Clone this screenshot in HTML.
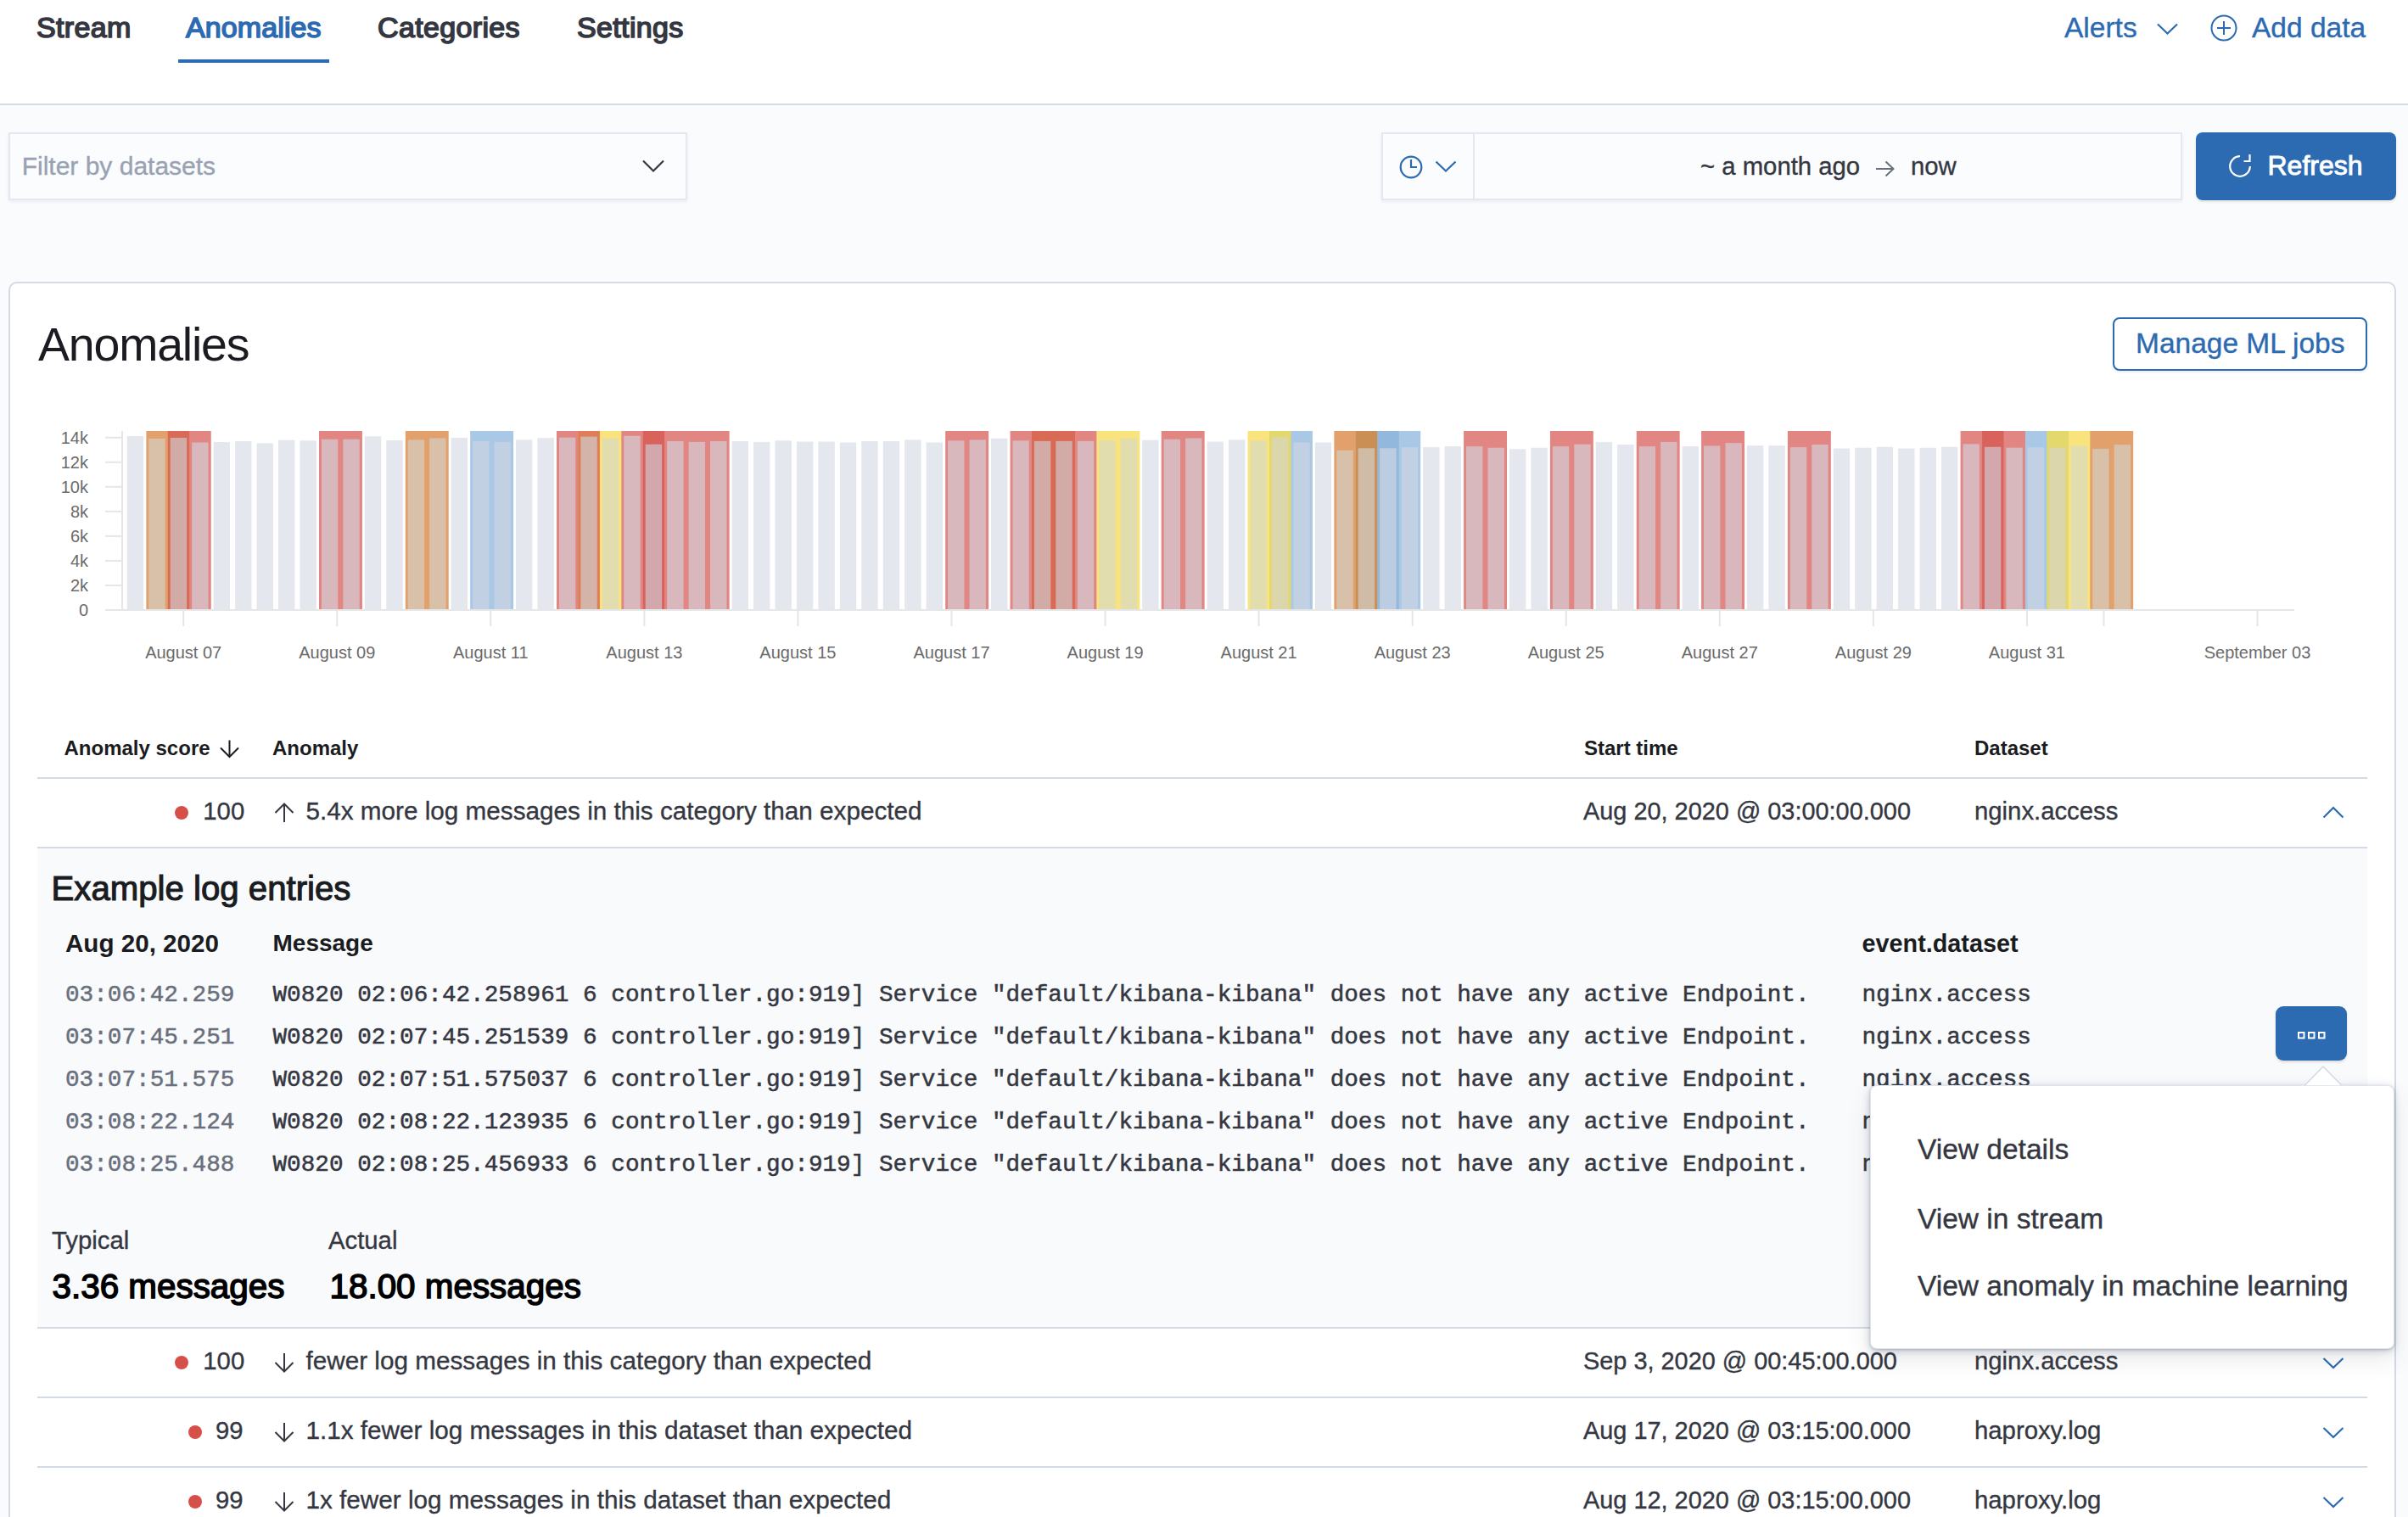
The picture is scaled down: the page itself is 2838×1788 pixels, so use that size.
<!DOCTYPE html>
<html><head><meta charset="utf-8">
<style>
html,body{margin:0;padding:0;}
body{width:2838px;height:1788px;overflow:hidden;position:relative;background:#fafbfd;font-family:'Liberation Sans', sans-serif;}
.t{position:absolute;white-space:nowrap;line-height:1;}
.r{position:absolute;}
svg{position:absolute;overflow:visible;}
</style></head><body>

<div class="r" style="left:0.0px;top:0.0px;width:2838.0px;height:122.0px;background:#ffffff;"></div>
<div class="r" style="left:0.0px;top:122.0px;width:2838.0px;height:2.0px;background:#d3dae6;"></div>
<div class="t" style="left:43.0px;top:15.4px;font-size:34px;color:#343741;font-weight:400;font-family:'Liberation Sans', sans-serif;letter-spacing:0.35px;-webkit-text-stroke:1.6px #343741;">Stream</div>
<div class="t" style="left:219.0px;top:15.4px;font-size:34px;color:#2c6ab1;font-weight:400;font-family:'Liberation Sans', sans-serif;letter-spacing:0.1px;-webkit-text-stroke:1.6px #2c6ab1;">Anomalies</div>
<div class="r" style="left:210.0px;top:70.0px;width:178.0px;height:4.0px;background:#2c6ab1;"></div>
<div class="t" style="left:445.0px;top:15.4px;font-size:34px;color:#343741;font-weight:400;font-family:'Liberation Sans', sans-serif;letter-spacing:0.35px;-webkit-text-stroke:1.6px #343741;">Categories</div>
<div class="t" style="left:680.0px;top:15.4px;font-size:34px;color:#343741;font-weight:400;font-family:'Liberation Sans', sans-serif;letter-spacing:0.35px;-webkit-text-stroke:1.6px #343741;">Settings</div>
<div class="t" style="left:2433.0px;top:15.6px;font-size:33.5px;color:#2c6ab1;font-weight:400;font-family:'Liberation Sans', sans-serif;-webkit-text-stroke:0.35px #2c6ab1;">Alerts</div>
<svg style="left:0;top:0" width="2838" height="120"><polyline points="2543,28.5 2554.5,39.5 2566,28.5" fill="none" stroke="#2c6ab1" stroke-width="2.2"/><circle cx="2621" cy="33" r="14.5" fill="none" stroke="#2c6ab1" stroke-width="2"/><line x1="2621" y1="25" x2="2621" y2="41" stroke="#2c6ab1" stroke-width="2"/><line x1="2613" y1="33" x2="2629" y2="33" stroke="#2c6ab1" stroke-width="2"/></svg>
<div class="t" style="left:2654.0px;top:15.6px;font-size:33.5px;color:#2c6ab1;font-weight:400;font-family:'Liberation Sans', sans-serif;-webkit-text-stroke:0.35px #2c6ab1;">Add data</div>
<div class="r" style="left:10px;top:156px;width:800px;height:80px;box-sizing:border-box;background:#fbfcfd;border:2px solid #e3e8f0;box-shadow:0 2px 4px rgba(152,162,179,0.15);"></div>
<div class="t" style="left:25.7px;top:180.6px;font-size:30px;color:#98a2b3;font-weight:400;font-family:'Liberation Sans', sans-serif;-webkit-text-stroke:0.35px #98a2b3;">Filter by datasets</div>
<svg style="left:0;top:0" width="900" height="260"><polyline points="758,189.5 770,201.5 782,189.5" fill="none" stroke="#343741" stroke-width="2.2"/></svg>
<div class="r" style="left:1628px;top:156px;width:944px;height:80px;box-sizing:border-box;background:#fbfcfd;border:2px solid #e3e8f0;box-shadow:0 2px 4px rgba(152,162,179,0.15);"></div>
<div class="r" style="left:1736.0px;top:158.0px;width:2.0px;height:76.0px;background:#e3e8f0;"></div>
<svg style="left:0;top:0" width="2838" height="260"><circle cx="1663" cy="197" r="12.3" fill="none" stroke="#2c6ab1" stroke-width="2.2"/><polyline points="1663,188 1663,197 1670,197" fill="none" stroke="#2c6ab1" stroke-width="2.2"/><polyline points="1692.5,190.5 1704,201.5 1715.5,190.5" fill="none" stroke="#2c6ab1" stroke-width="2.2"/><line x1="2211" y1="199" x2="2232" y2="199" stroke="#69707d" stroke-width="2"/><polyline points="2222.5,190.5 2231.5,199 2222.5,207.5" fill="none" stroke="#69707d" stroke-width="2"/></svg>
<div class="t" style="left:2004.0px;top:181.2px;font-size:29.3px;color:#343741;font-weight:400;font-family:'Liberation Sans', sans-serif;-webkit-text-stroke:0.35px #343741;">~ a month ago</div>
<div class="t" style="left:2252.0px;top:181.2px;font-size:29.3px;color:#343741;font-weight:400;font-family:'Liberation Sans', sans-serif;-webkit-text-stroke:0.35px #343741;">now</div>
<div class="r" style="left:2588px;top:156px;width:236px;height:80px;border-radius:8px;background:#2c6ab1;box-shadow:0 2px 3px rgba(0,0,0,0.1);"></div>
<svg style="left:0;top:0" width="2838" height="260"><path d="M2651.8,196 A11.8,11.8 0 1 1 2640,184.2" fill="none" stroke="#fff" stroke-width="2.2"/><polyline points="2644.5,190 2651.5,190 2651.5,182" fill="none" stroke="#fff" stroke-width="2.2"/></svg>
<div class="t" style="left:2672.5px;top:178.9px;font-size:32px;color:#ffffff;font-weight:400;font-family:'Liberation Sans', sans-serif;-webkit-text-stroke:0.9px #ffffff;">Refresh</div>
<div class="r" style="left:10px;top:332px;width:2814px;height:1600px;box-sizing:border-box;background:#fff;border:2px solid #d3dae6;border-radius:10px;"></div>
<div class="t" style="left:45.0px;top:378.9px;font-size:55.5px;color:#1a1c21;font-weight:400;font-family:'Liberation Sans', sans-serif;letter-spacing:-1.2px;">Anomalies</div>
<div class="r" style="left:2490px;top:374px;width:300px;height:63px;box-sizing:border-box;border:2px solid #2c6ab1;border-radius:8px;background:#fff;box-shadow:0 2px 3px rgba(0,0,0,0.08);"></div>
<div class="t" style="left:2517.0px;top:387.6px;font-size:33.5px;color:#2c6ab1;font-weight:400;font-family:'Liberation Sans', sans-serif;-webkit-text-stroke:0.35px #2c6ab1;">Manage ML jobs</div>
<svg style="left:0;top:0" width="2838" height="800"><line x1="124" y1="719.0" x2="143" y2="719.0" stroke="#e6e6e6" stroke-width="2"/><text x="104" y="726.0" text-anchor="end" font-family="Liberation Sans" font-size="20" fill="#6b6b6b">0</text><line x1="124" y1="690.0" x2="143" y2="690.0" stroke="#e6e6e6" stroke-width="2"/><text x="104" y="697.0" text-anchor="end" font-family="Liberation Sans" font-size="20" fill="#6b6b6b">2k</text><line x1="124" y1="660.9" x2="143" y2="660.9" stroke="#e6e6e6" stroke-width="2"/><text x="104" y="667.9" text-anchor="end" font-family="Liberation Sans" font-size="20" fill="#6b6b6b">4k</text><line x1="124" y1="631.9" x2="143" y2="631.9" stroke="#e6e6e6" stroke-width="2"/><text x="104" y="638.9" text-anchor="end" font-family="Liberation Sans" font-size="20" fill="#6b6b6b">6k</text><line x1="124" y1="602.8" x2="143" y2="602.8" stroke="#e6e6e6" stroke-width="2"/><text x="104" y="609.8" text-anchor="end" font-family="Liberation Sans" font-size="20" fill="#6b6b6b">8k</text><line x1="124" y1="573.8" x2="143" y2="573.8" stroke="#e6e6e6" stroke-width="2"/><text x="104" y="580.8" text-anchor="end" font-family="Liberation Sans" font-size="20" fill="#6b6b6b">10k</text><line x1="124" y1="544.8" x2="143" y2="544.8" stroke="#e6e6e6" stroke-width="2"/><text x="104" y="551.8" text-anchor="end" font-family="Liberation Sans" font-size="20" fill="#6b6b6b">12k</text><line x1="124" y1="515.7" x2="143" y2="515.7" stroke="#e6e6e6" stroke-width="2"/><text x="104" y="522.7" text-anchor="end" font-family="Liberation Sans" font-size="20" fill="#6b6b6b">14k</text><line x1="144" y1="508.0" x2="144" y2="719.0" stroke="#e6e6e6" stroke-width="2"/><rect x="172.36" y="508.0" width="26.05" height="211.0" fill="#e2a06c"/><rect x="197.81" y="508.0" width="26.05" height="211.0" fill="#d96a55"/><rect x="223.26" y="508.0" width="25.46" height="211.0" fill="#e18682"/><rect x="376.00" y="508.0" width="50.91" height="211.0" fill="#e18682"/><rect x="477.81" y="508.0" width="50.91" height="211.0" fill="#e2a06c"/><rect x="554.18" y="508.0" width="50.91" height="211.0" fill="#a9c8e6"/><rect x="656.00" y="508.0" width="26.05" height="211.0" fill="#e18682"/><rect x="681.45" y="508.0" width="26.06" height="211.0" fill="#df7e56"/><rect x="706.91" y="508.0" width="26.05" height="211.0" fill="#f9e37c"/><rect x="732.36" y="508.0" width="26.06" height="211.0" fill="#e18682"/><rect x="757.82" y="508.0" width="26.06" height="211.0" fill="#d9625c"/><rect x="783.27" y="508.0" width="76.37" height="211.0" fill="#e18682"/><rect x="1114.19" y="508.0" width="50.91" height="211.0" fill="#e18682"/><rect x="1190.56" y="508.0" width="26.05" height="211.0" fill="#e18682"/><rect x="1216.01" y="508.0" width="51.51" height="211.0" fill="#d96a55"/><rect x="1266.92" y="508.0" width="26.05" height="211.0" fill="#e18682"/><rect x="1292.38" y="508.0" width="50.91" height="211.0" fill="#f9e37c"/><rect x="1368.74" y="508.0" width="50.91" height="211.0" fill="#e18682"/><rect x="1470.56" y="508.0" width="26.06" height="211.0" fill="#f9e37c"/><rect x="1496.02" y="508.0" width="26.05" height="211.0" fill="#e2d86c"/><rect x="1521.47" y="508.0" width="25.45" height="211.0" fill="#a9c8e6"/><rect x="1572.38" y="508.0" width="26.05" height="211.0" fill="#e2a06c"/><rect x="1597.84" y="508.0" width="26.05" height="211.0" fill="#c98f55"/><rect x="1623.29" y="508.0" width="26.05" height="211.0" fill="#93b8de"/><rect x="1648.74" y="508.0" width="25.46" height="211.0" fill="#a9c8e6"/><rect x="1725.11" y="508.0" width="50.91" height="211.0" fill="#e18682"/><rect x="1826.93" y="508.0" width="50.91" height="211.0" fill="#e18682"/><rect x="1928.75" y="508.0" width="50.91" height="211.0" fill="#e18682"/><rect x="2005.12" y="508.0" width="50.91" height="211.0" fill="#e18682"/><rect x="2106.93" y="508.0" width="50.91" height="211.0" fill="#e18682"/><rect x="2310.57" y="508.0" width="26.05" height="211.0" fill="#e18682"/><rect x="2336.03" y="508.0" width="26.06" height="211.0" fill="#d9625c"/><rect x="2361.49" y="508.0" width="26.05" height="211.0" fill="#e18682"/><rect x="2386.94" y="508.0" width="26.05" height="211.0" fill="#a9c8e6"/><rect x="2412.39" y="508.0" width="26.05" height="211.0" fill="#e2d86c"/><rect x="2437.85" y="508.0" width="26.05" height="211.0" fill="#f9e37c"/><rect x="2463.30" y="508.0" width="50.91" height="211.0" fill="#e2a06c"/><rect x="149.80" y="514.0" width="19.4" height="205.0" fill="#e4e7ee"/><rect x="175.26" y="517.0" width="19.4" height="202.0" fill="#d9c0a9"/><rect x="200.71" y="516.0" width="19.4" height="203.0" fill="#d3aba6"/><rect x="226.16" y="521.5" width="19.4" height="197.5" fill="#d8b7bd"/><rect x="251.62" y="521.0" width="19.4" height="198.0" fill="#e4e7ee"/><rect x="277.07" y="520.0" width="19.4" height="199.0" fill="#e4e7ee"/><rect x="302.53" y="522.4" width="19.4" height="196.6" fill="#e4e7ee"/><rect x="327.99" y="518.7" width="19.4" height="200.3" fill="#e4e7ee"/><rect x="353.44" y="519.3" width="19.4" height="199.7" fill="#e4e7ee"/><rect x="378.89" y="517.7" width="19.4" height="201.3" fill="#d8b7bd"/><rect x="404.35" y="517.7" width="19.4" height="201.3" fill="#d8b7bd"/><rect x="429.80" y="514.3" width="19.4" height="204.7" fill="#e4e7ee"/><rect x="455.26" y="519.0" width="19.4" height="200.0" fill="#e4e7ee"/><rect x="480.71" y="518.4" width="19.4" height="200.6" fill="#d9c0a9"/><rect x="506.17" y="516.5" width="19.4" height="202.5" fill="#d9c0a9"/><rect x="531.62" y="515.9" width="19.4" height="203.1" fill="#e4e7ee"/><rect x="557.08" y="520.0" width="19.4" height="199.0" fill="#c1d0e2"/><rect x="582.53" y="520.9" width="19.4" height="198.1" fill="#c1d0e2"/><rect x="607.99" y="518.4" width="19.4" height="200.6" fill="#e4e7ee"/><rect x="633.44" y="516.2" width="19.4" height="202.8" fill="#e4e7ee"/><rect x="658.90" y="515.6" width="19.4" height="203.4" fill="#d8b7bd"/><rect x="684.35" y="514.6" width="19.4" height="204.4" fill="#d4b4a8"/><rect x="709.81" y="516.8" width="19.4" height="202.2" fill="#e1ddae"/><rect x="735.26" y="513.7" width="19.4" height="205.3" fill="#d8b7bd"/><rect x="760.72" y="523.7" width="19.4" height="195.3" fill="#d3a8ad"/><rect x="786.17" y="520.0" width="19.4" height="199.0" fill="#d8b7bd"/><rect x="811.63" y="520.9" width="19.4" height="198.1" fill="#d8b7bd"/><rect x="837.08" y="520.0" width="19.4" height="199.0" fill="#d8b7bd"/><rect x="862.54" y="519.9" width="19.4" height="199.1" fill="#e4e7ee"/><rect x="887.99" y="520.9" width="19.4" height="198.1" fill="#e4e7ee"/><rect x="913.45" y="519.3" width="19.4" height="199.7" fill="#e4e7ee"/><rect x="938.90" y="520.5" width="19.4" height="198.5" fill="#e4e7ee"/><rect x="964.36" y="520.5" width="19.4" height="198.5" fill="#e4e7ee"/><rect x="989.81" y="521.5" width="19.4" height="197.5" fill="#e4e7ee"/><rect x="1015.27" y="519.9" width="19.4" height="199.1" fill="#e4e7ee"/><rect x="1040.73" y="519.9" width="19.4" height="199.1" fill="#e4e7ee"/><rect x="1066.18" y="518.4" width="19.4" height="200.6" fill="#e4e7ee"/><rect x="1091.63" y="521.5" width="19.4" height="197.5" fill="#e4e7ee"/><rect x="1117.09" y="519.3" width="19.4" height="199.7" fill="#d8b7bd"/><rect x="1142.55" y="518.4" width="19.4" height="200.6" fill="#d8b7bd"/><rect x="1168.00" y="516.8" width="19.4" height="202.2" fill="#e4e7ee"/><rect x="1193.46" y="519.3" width="19.4" height="199.7" fill="#d8b7bd"/><rect x="1218.91" y="519.9" width="19.4" height="199.1" fill="#d3aba6"/><rect x="1244.37" y="519.9" width="19.4" height="199.1" fill="#d3aba6"/><rect x="1269.82" y="519.9" width="19.4" height="199.1" fill="#d8b7bd"/><rect x="1295.28" y="519.0" width="19.4" height="200.0" fill="#e1ddae"/><rect x="1320.73" y="516.8" width="19.4" height="202.2" fill="#e1ddae"/><rect x="1346.19" y="518.7" width="19.4" height="200.3" fill="#e4e7ee"/><rect x="1371.64" y="517.7" width="19.4" height="201.3" fill="#d8b7bd"/><rect x="1397.10" y="516.5" width="19.4" height="202.5" fill="#d8b7bd"/><rect x="1422.55" y="520.5" width="19.4" height="198.5" fill="#e4e7ee"/><rect x="1448.01" y="518.4" width="19.4" height="200.6" fill="#e4e7ee"/><rect x="1473.46" y="519.3" width="19.4" height="199.7" fill="#e1ddae"/><rect x="1498.92" y="515.2" width="19.4" height="203.8" fill="#dbd6ac"/><rect x="1524.37" y="521.5" width="19.4" height="197.5" fill="#c1d0e2"/><rect x="1549.83" y="521.5" width="19.4" height="197.5" fill="#e4e7ee"/><rect x="1575.28" y="530.8" width="19.4" height="188.2" fill="#d9c0a9"/><rect x="1600.74" y="528.3" width="19.4" height="190.7" fill="#d0bba6"/><rect x="1626.19" y="528.3" width="19.4" height="190.7" fill="#bccde2"/><rect x="1651.64" y="527.1" width="19.4" height="191.9" fill="#c1d0e2"/><rect x="1677.10" y="527.1" width="19.4" height="191.9" fill="#e4e7ee"/><rect x="1702.56" y="526.1" width="19.4" height="192.9" fill="#e4e7ee"/><rect x="1728.01" y="526.1" width="19.4" height="192.9" fill="#d8b7bd"/><rect x="1753.47" y="527.7" width="19.4" height="191.3" fill="#d8b7bd"/><rect x="1778.92" y="529.3" width="19.4" height="189.7" fill="#e4e7ee"/><rect x="1804.38" y="527.7" width="19.4" height="191.3" fill="#e4e7ee"/><rect x="1829.83" y="526.1" width="19.4" height="192.9" fill="#d8b7bd"/><rect x="1855.29" y="523.7" width="19.4" height="195.3" fill="#d8b7bd"/><rect x="1880.74" y="520.9" width="19.4" height="198.1" fill="#e4e7ee"/><rect x="1906.20" y="524.0" width="19.4" height="195.0" fill="#e4e7ee"/><rect x="1931.65" y="526.1" width="19.4" height="192.9" fill="#d8b7bd"/><rect x="1957.11" y="520.9" width="19.4" height="198.1" fill="#d8b7bd"/><rect x="1982.56" y="526.1" width="19.4" height="192.9" fill="#e4e7ee"/><rect x="2008.02" y="525.5" width="19.4" height="193.5" fill="#d8b7bd"/><rect x="2033.47" y="522.1" width="19.4" height="196.9" fill="#d8b7bd"/><rect x="2058.92" y="525.2" width="19.4" height="193.8" fill="#e4e7ee"/><rect x="2084.38" y="525.2" width="19.4" height="193.8" fill="#e4e7ee"/><rect x="2109.84" y="527.1" width="19.4" height="191.9" fill="#d8b7bd"/><rect x="2135.29" y="524.0" width="19.4" height="195.0" fill="#d8b7bd"/><rect x="2160.74" y="528.6" width="19.4" height="190.4" fill="#e4e7ee"/><rect x="2186.20" y="527.7" width="19.4" height="191.3" fill="#e4e7ee"/><rect x="2211.66" y="526.8" width="19.4" height="192.2" fill="#e4e7ee"/><rect x="2237.11" y="528.6" width="19.4" height="190.4" fill="#e4e7ee"/><rect x="2262.57" y="527.7" width="19.4" height="191.3" fill="#e4e7ee"/><rect x="2288.02" y="526.8" width="19.4" height="192.2" fill="#e4e7ee"/><rect x="2313.47" y="523.4" width="19.4" height="195.6" fill="#d8b7bd"/><rect x="2338.93" y="526.8" width="19.4" height="192.2" fill="#d3a8ad"/><rect x="2364.39" y="527.6" width="19.4" height="191.4" fill="#d8b7bd"/><rect x="2389.84" y="527.3" width="19.4" height="191.7" fill="#c1d0e2"/><rect x="2415.30" y="527.6" width="19.4" height="191.4" fill="#dbd6ac"/><rect x="2440.75" y="525.7" width="19.4" height="193.3" fill="#e1ddae"/><rect x="2466.20" y="528.9" width="19.4" height="190.1" fill="#d9c0a9"/><rect x="2491.66" y="524.1" width="19.4" height="194.9" fill="#d9c0a9"/><line x1="124" y1="719.0" x2="2704" y2="719.0" stroke="#e6e6e6" stroke-width="2"/><line x1="216.2" y1="719.0" x2="216.2" y2="738" stroke="#e6e6e6" stroke-width="2"/><text x="216.2" y="775.7" text-anchor="middle" font-family="Liberation Sans" font-size="20" fill="#6b6b6b">August 07</text><line x1="397.3" y1="719.0" x2="397.3" y2="738" stroke="#e6e6e6" stroke-width="2"/><text x="397.3" y="775.7" text-anchor="middle" font-family="Liberation Sans" font-size="20" fill="#6b6b6b">August 09</text><line x1="578.3" y1="719.0" x2="578.3" y2="738" stroke="#e6e6e6" stroke-width="2"/><text x="578.3" y="775.7" text-anchor="middle" font-family="Liberation Sans" font-size="20" fill="#6b6b6b">August 11</text><line x1="759.4" y1="719.0" x2="759.4" y2="738" stroke="#e6e6e6" stroke-width="2"/><text x="759.4" y="775.7" text-anchor="middle" font-family="Liberation Sans" font-size="20" fill="#6b6b6b">August 13</text><line x1="940.4" y1="719.0" x2="940.4" y2="738" stroke="#e6e6e6" stroke-width="2"/><text x="940.4" y="775.7" text-anchor="middle" font-family="Liberation Sans" font-size="20" fill="#6b6b6b">August 15</text><line x1="1121.5" y1="719.0" x2="1121.5" y2="738" stroke="#e6e6e6" stroke-width="2"/><text x="1121.5" y="775.7" text-anchor="middle" font-family="Liberation Sans" font-size="20" fill="#6b6b6b">August 17</text><line x1="1302.6" y1="719.0" x2="1302.6" y2="738" stroke="#e6e6e6" stroke-width="2"/><text x="1302.6" y="775.7" text-anchor="middle" font-family="Liberation Sans" font-size="20" fill="#6b6b6b">August 19</text><line x1="1483.6" y1="719.0" x2="1483.6" y2="738" stroke="#e6e6e6" stroke-width="2"/><text x="1483.6" y="775.7" text-anchor="middle" font-family="Liberation Sans" font-size="20" fill="#6b6b6b">August 21</text><line x1="1664.7" y1="719.0" x2="1664.7" y2="738" stroke="#e6e6e6" stroke-width="2"/><text x="1664.7" y="775.7" text-anchor="middle" font-family="Liberation Sans" font-size="20" fill="#6b6b6b">August 23</text><line x1="1845.7" y1="719.0" x2="1845.7" y2="738" stroke="#e6e6e6" stroke-width="2"/><text x="1845.7" y="775.7" text-anchor="middle" font-family="Liberation Sans" font-size="20" fill="#6b6b6b">August 25</text><line x1="2026.8" y1="719.0" x2="2026.8" y2="738" stroke="#e6e6e6" stroke-width="2"/><text x="2026.8" y="775.7" text-anchor="middle" font-family="Liberation Sans" font-size="20" fill="#6b6b6b">August 27</text><line x1="2207.9" y1="719.0" x2="2207.9" y2="738" stroke="#e6e6e6" stroke-width="2"/><text x="2207.9" y="775.7" text-anchor="middle" font-family="Liberation Sans" font-size="20" fill="#6b6b6b">August 29</text><line x1="2388.9" y1="719.0" x2="2388.9" y2="738" stroke="#e6e6e6" stroke-width="2"/><text x="2388.9" y="775.7" text-anchor="middle" font-family="Liberation Sans" font-size="20" fill="#6b6b6b">August 31</text><line x1="2479.5" y1="719.0" x2="2479.5" y2="738" stroke="#e6e6e6" stroke-width="2"/><line x1="2660.5" y1="719.0" x2="2660.5" y2="738" stroke="#e6e6e6" stroke-width="2"/><text x="2660.5" y="775.7" text-anchor="middle" font-family="Liberation Sans" font-size="20" fill="#6b6b6b">September 03</text></svg>
<div class="t" style="left:75.5px;top:870.1px;font-size:24px;color:#1a1c21;font-weight:700;font-family:'Liberation Sans', sans-serif;">Anomaly score</div>
<svg style="left:0;top:0" width="2838" height="1000"><line x1="270.5" y1="872.5" x2="270.5" y2="891.5" stroke="#1a1c21" stroke-width="2"/><polyline points="260,881.5 270.5,892 281,881.5" fill="none" stroke="#1a1c21" stroke-width="2"/></svg>
<div class="t" style="left:321.0px;top:870.1px;font-size:24px;color:#1a1c21;font-weight:700;font-family:'Liberation Sans', sans-serif;">Anomaly</div>
<div class="t" style="left:1867.0px;top:870.1px;font-size:24px;color:#1a1c21;font-weight:700;font-family:'Liberation Sans', sans-serif;">Start time</div>
<div class="t" style="left:2327.0px;top:870.1px;font-size:24px;color:#1a1c21;font-weight:700;font-family:'Liberation Sans', sans-serif;">Dataset</div>
<div class="r" style="left:44.0px;top:916.0px;width:2746.0px;height:2.0px;background:#d3dae6;"></div>
<div class="r" style="left:206px;top:950.0px;width:16px;height:16px;border-radius:50%;background:#d6504a;"></div>
<div class="t" style="left:239.3px;top:941.4px;font-size:29.3px;color:#343741;font-weight:400;font-family:'Liberation Sans', sans-serif;-webkit-text-stroke:0.35px #343741;">100</div>
<svg style="left:0;top:0" width="2838" height="1788"><line x1="335" y1="948.0" x2="335" y2="969.0" stroke="#343741" stroke-width="2"/><polyline points="324.5,958.0 335,947.5 345.5,958.0" fill="none" stroke="#343741" stroke-width="2"/><polyline points="2738.5,963.5 2750,952.0 2761.5,963.5" fill="none" stroke="#2c6ab1" stroke-width="2.2"/></svg>
<div class="t" style="left:360.5px;top:941.1px;font-size:29.7px;color:#343741;font-weight:400;font-family:'Liberation Sans', sans-serif;-webkit-text-stroke:0.35px #343741;">5.4x more log messages in this category than expected</div>
<div class="t" style="left:1866.0px;top:941.7px;font-size:28.9px;color:#343741;font-weight:400;font-family:'Liberation Sans', sans-serif;-webkit-text-stroke:0.35px #343741;">Aug 20, 2020 @ 03:00:00.000</div>
<div class="t" style="left:2327.0px;top:941.4px;font-size:29.3px;color:#343741;font-weight:400;font-family:'Liberation Sans', sans-serif;-webkit-text-stroke:0.35px #343741;">nginx.access</div>
<div class="r" style="left:44.0px;top:998.0px;width:2746.0px;height:2.0px;background:#d3dae6;"></div>
<div class="r" style="left:44.0px;top:1000.0px;width:2746.0px;height:564.0px;background:#f9fafc;"></div>
<div class="t" style="left:60.5px;top:1027.7px;font-size:40.2px;color:#1a1c21;font-weight:400;font-family:'Liberation Sans', sans-serif;-webkit-text-stroke:1.1px #1a1c21;">Example log entries</div>
<div class="t" style="left:77.0px;top:1096.9px;font-size:29.6px;color:#1a1c21;font-weight:700;font-family:'Liberation Sans', sans-serif;">Aug 20, 2020</div>
<div class="t" style="left:321.5px;top:1098.3px;font-size:28px;color:#1a1c21;font-weight:700;font-family:'Liberation Sans', sans-serif;">Message</div>
<div class="t" style="left:2194.5px;top:1097.6px;font-size:28.8px;color:#1a1c21;font-weight:700;font-family:'Liberation Sans', sans-serif;">event.dataset</div>
<div class="t" style="left:77.0px;top:1158.6px;font-size:27.7px;color:#69707d;font-weight:400;font-family:'Liberation Mono', monospace;-webkit-text-stroke:0.5px #69707d;">03:06:42.259</div>
<div class="t" style="left:321.5px;top:1158.6px;font-size:27.7px;color:#343741;font-weight:400;font-family:'Liberation Mono', monospace;-webkit-text-stroke:0.5px #343741;">W0820 02:06:42.258961 6 controller.go:919] Service "default/kibana-kibana" does not have any active Endpoint.</div>
<div class="t" style="left:2194.5px;top:1158.6px;font-size:27.7px;color:#343741;font-weight:400;font-family:'Liberation Mono', monospace;-webkit-text-stroke:0.5px #343741;">nginx.access</div>
<div class="t" style="left:77.0px;top:1208.6px;font-size:27.7px;color:#69707d;font-weight:400;font-family:'Liberation Mono', monospace;-webkit-text-stroke:0.5px #69707d;">03:07:45.251</div>
<div class="t" style="left:321.5px;top:1208.6px;font-size:27.7px;color:#343741;font-weight:400;font-family:'Liberation Mono', monospace;-webkit-text-stroke:0.5px #343741;">W0820 02:07:45.251539 6 controller.go:919] Service "default/kibana-kibana" does not have any active Endpoint.</div>
<div class="t" style="left:2194.5px;top:1208.6px;font-size:27.7px;color:#343741;font-weight:400;font-family:'Liberation Mono', monospace;-webkit-text-stroke:0.5px #343741;">nginx.access</div>
<div class="t" style="left:77.0px;top:1258.6px;font-size:27.7px;color:#69707d;font-weight:400;font-family:'Liberation Mono', monospace;-webkit-text-stroke:0.5px #69707d;">03:07:51.575</div>
<div class="t" style="left:321.5px;top:1258.6px;font-size:27.7px;color:#343741;font-weight:400;font-family:'Liberation Mono', monospace;-webkit-text-stroke:0.5px #343741;">W0820 02:07:51.575037 6 controller.go:919] Service "default/kibana-kibana" does not have any active Endpoint.</div>
<div class="t" style="left:2194.5px;top:1258.6px;font-size:27.7px;color:#343741;font-weight:400;font-family:'Liberation Mono', monospace;-webkit-text-stroke:0.5px #343741;">nginx.access</div>
<div class="t" style="left:77.0px;top:1308.6px;font-size:27.7px;color:#69707d;font-weight:400;font-family:'Liberation Mono', monospace;-webkit-text-stroke:0.5px #69707d;">03:08:22.124</div>
<div class="t" style="left:321.5px;top:1308.6px;font-size:27.7px;color:#343741;font-weight:400;font-family:'Liberation Mono', monospace;-webkit-text-stroke:0.5px #343741;">W0820 02:08:22.123935 6 controller.go:919] Service "default/kibana-kibana" does not have any active Endpoint.</div>
<div class="t" style="left:2194.5px;top:1308.6px;font-size:27.7px;color:#343741;font-weight:400;font-family:'Liberation Mono', monospace;-webkit-text-stroke:0.5px #343741;">nginx.access</div>
<div class="t" style="left:77.0px;top:1358.6px;font-size:27.7px;color:#69707d;font-weight:400;font-family:'Liberation Mono', monospace;-webkit-text-stroke:0.5px #69707d;">03:08:25.488</div>
<div class="t" style="left:321.5px;top:1358.6px;font-size:27.7px;color:#343741;font-weight:400;font-family:'Liberation Mono', monospace;-webkit-text-stroke:0.5px #343741;">W0820 02:08:25.456933 6 controller.go:919] Service "default/kibana-kibana" does not have any active Endpoint.</div>
<div class="t" style="left:2194.5px;top:1358.6px;font-size:27.7px;color:#343741;font-weight:400;font-family:'Liberation Mono', monospace;-webkit-text-stroke:0.5px #343741;">nginx.access</div>
<div class="r" style="left:2682px;top:1186px;width:84px;height:64px;border-radius:9px;background:#2c6ab1;box-shadow:0 2px 3px rgba(0,0,0,0.12);"></div>
<svg style="left:0;top:0" width="2838" height="1788"><rect x="2709" y="1217" width="6.5" height="6.5" fill="none" stroke="#fff" stroke-width="2"/><rect x="2721" y="1217" width="6.5" height="6.5" fill="none" stroke="#fff" stroke-width="2"/><rect x="2733" y="1217" width="6.5" height="6.5" fill="none" stroke="#fff" stroke-width="2"/></svg>
<div class="t" style="left:61.0px;top:1446.7px;font-size:29.3px;color:#343741;font-weight:400;font-family:'Liberation Sans', sans-serif;-webkit-text-stroke:0.35px #343741;">Typical</div>
<div class="t" style="left:387.0px;top:1446.7px;font-size:29.3px;color:#343741;font-weight:400;font-family:'Liberation Sans', sans-serif;-webkit-text-stroke:0.35px #343741;">Actual</div>
<div class="t" style="left:61.5px;top:1495.8px;font-size:40.4px;color:#000000;font-weight:400;font-family:'Liberation Sans', sans-serif;-webkit-text-stroke:1.5px #000000;">3.36 messages</div>
<div class="t" style="left:388.5px;top:1495.8px;font-size:40.4px;color:#000000;font-weight:400;font-family:'Liberation Sans', sans-serif;-webkit-text-stroke:1.5px #000000;">18.00 messages</div>
<div class="r" style="left:44.0px;top:1564.0px;width:2746.0px;height:2.0px;background:#d3dae6;"></div>
<div class="r" style="left:206px;top:1598.0px;width:16px;height:16px;border-radius:50%;background:#d6504a;"></div>
<div class="t" style="left:239.3px;top:1589.4px;font-size:29.3px;color:#343741;font-weight:400;font-family:'Liberation Sans', sans-serif;-webkit-text-stroke:0.35px #343741;">100</div>
<svg style="left:0;top:0" width="2838" height="1788"><line x1="335" y1="1595.0" x2="335" y2="1616.0" stroke="#343741" stroke-width="2"/><polyline points="324.5,1606.0 335,1616.5 345.5,1606.0" fill="none" stroke="#343741" stroke-width="2"/><polyline points="2738.5,1601.0 2750,1612.0 2761.5,1601.0" fill="none" stroke="#2c6ab1" stroke-width="2.2"/></svg>
<div class="t" style="left:360.5px;top:1589.1px;font-size:29.7px;color:#343741;font-weight:400;font-family:'Liberation Sans', sans-serif;-webkit-text-stroke:0.35px #343741;">fewer log messages in this category than expected</div>
<div class="t" style="left:1866.0px;top:1589.7px;font-size:28.9px;color:#343741;font-weight:400;font-family:'Liberation Sans', sans-serif;-webkit-text-stroke:0.35px #343741;">Sep 3, 2020 @ 00:45:00.000</div>
<div class="t" style="left:2327.0px;top:1589.4px;font-size:29.3px;color:#343741;font-weight:400;font-family:'Liberation Sans', sans-serif;-webkit-text-stroke:0.35px #343741;">nginx.access</div>
<div class="r" style="left:44.0px;top:1646.0px;width:2746.0px;height:2.0px;background:#d3dae6;"></div>
<div class="r" style="left:222px;top:1680.0px;width:16px;height:16px;border-radius:50%;background:#d6504a;"></div>
<div class="t" style="left:254.0px;top:1671.4px;font-size:29.3px;color:#343741;font-weight:400;font-family:'Liberation Sans', sans-serif;-webkit-text-stroke:0.35px #343741;">99</div>
<svg style="left:0;top:0" width="2838" height="1788"><line x1="335" y1="1677.0" x2="335" y2="1698.0" stroke="#343741" stroke-width="2"/><polyline points="324.5,1688.0 335,1698.5 345.5,1688.0" fill="none" stroke="#343741" stroke-width="2"/><polyline points="2738.5,1683.0 2750,1694.0 2761.5,1683.0" fill="none" stroke="#2c6ab1" stroke-width="2.2"/></svg>
<div class="t" style="left:360.5px;top:1671.1px;font-size:29.7px;color:#343741;font-weight:400;font-family:'Liberation Sans', sans-serif;-webkit-text-stroke:0.35px #343741;">1.1x fewer log messages in this dataset than expected</div>
<div class="t" style="left:1866.0px;top:1671.7px;font-size:28.9px;color:#343741;font-weight:400;font-family:'Liberation Sans', sans-serif;-webkit-text-stroke:0.35px #343741;">Aug 17, 2020 @ 03:15:00.000</div>
<div class="t" style="left:2327.0px;top:1671.4px;font-size:29.3px;color:#343741;font-weight:400;font-family:'Liberation Sans', sans-serif;-webkit-text-stroke:0.35px #343741;">haproxy.log</div>
<div class="r" style="left:44.0px;top:1728.0px;width:2746.0px;height:2.0px;background:#d3dae6;"></div>
<div class="r" style="left:222px;top:1762.0px;width:16px;height:16px;border-radius:50%;background:#d6504a;"></div>
<div class="t" style="left:254.0px;top:1753.4px;font-size:29.3px;color:#343741;font-weight:400;font-family:'Liberation Sans', sans-serif;-webkit-text-stroke:0.35px #343741;">99</div>
<svg style="left:0;top:0" width="2838" height="1788"><line x1="335" y1="1759.0" x2="335" y2="1780.0" stroke="#343741" stroke-width="2"/><polyline points="324.5,1770.0 335,1780.5 345.5,1770.0" fill="none" stroke="#343741" stroke-width="2"/><polyline points="2738.5,1765.0 2750,1776.0 2761.5,1765.0" fill="none" stroke="#2c6ab1" stroke-width="2.2"/></svg>
<div class="t" style="left:360.5px;top:1753.1px;font-size:29.7px;color:#343741;font-weight:400;font-family:'Liberation Sans', sans-serif;-webkit-text-stroke:0.35px #343741;">1x fewer log messages in this dataset than expected</div>
<div class="t" style="left:1866.0px;top:1753.7px;font-size:28.9px;color:#343741;font-weight:400;font-family:'Liberation Sans', sans-serif;-webkit-text-stroke:0.35px #343741;">Aug 12, 2020 @ 03:15:00.000</div>
<div class="t" style="left:2327.0px;top:1753.4px;font-size:29.3px;color:#343741;font-weight:400;font-family:'Liberation Sans', sans-serif;-webkit-text-stroke:0.35px #343741;">haproxy.log</div>
<div class="r" style="left:2204px;top:1279px;width:618px;height:311px;box-sizing:border-box;background:#fff;border:1px solid rgba(211,218,230,0.7);border-radius:8px;box-shadow:0 1px 3px rgba(65,78,101,0.28),0 4px 8px rgba(65,78,101,0.14),0 12px 28px rgba(65,78,101,0.12),-2px 0 10px rgba(65,78,101,0.08);z-index:5;"></div>
<svg style="left:0;top:0;z-index:6" width="2838" height="1788"><polygon points="2715.5,1280 2738,1257 2760.5,1280" fill="#fff" stroke="#d3dae6" stroke-width="1.5"/><rect x="2712" y="1279.8" width="52" height="4" fill="#fff"/></svg>
<div class="t" style="left:2260.0px;top:1337.8px;font-size:33.5px;color:#343741;font-weight:400;font-family:'Liberation Sans', sans-serif;z-index:7;-webkit-text-stroke:0.35px #343741;">View details</div>
<div class="t" style="left:2260.0px;top:1420.1px;font-size:33.5px;color:#343741;font-weight:400;font-family:'Liberation Sans', sans-serif;z-index:7;-webkit-text-stroke:0.35px #343741;">View in stream</div>
<div class="t" style="left:2260.0px;top:1499.3px;font-size:33.5px;color:#343741;font-weight:400;font-family:'Liberation Sans', sans-serif;z-index:7;-webkit-text-stroke:0.35px #343741;">View anomaly in machine learning</div>
</body></html>
